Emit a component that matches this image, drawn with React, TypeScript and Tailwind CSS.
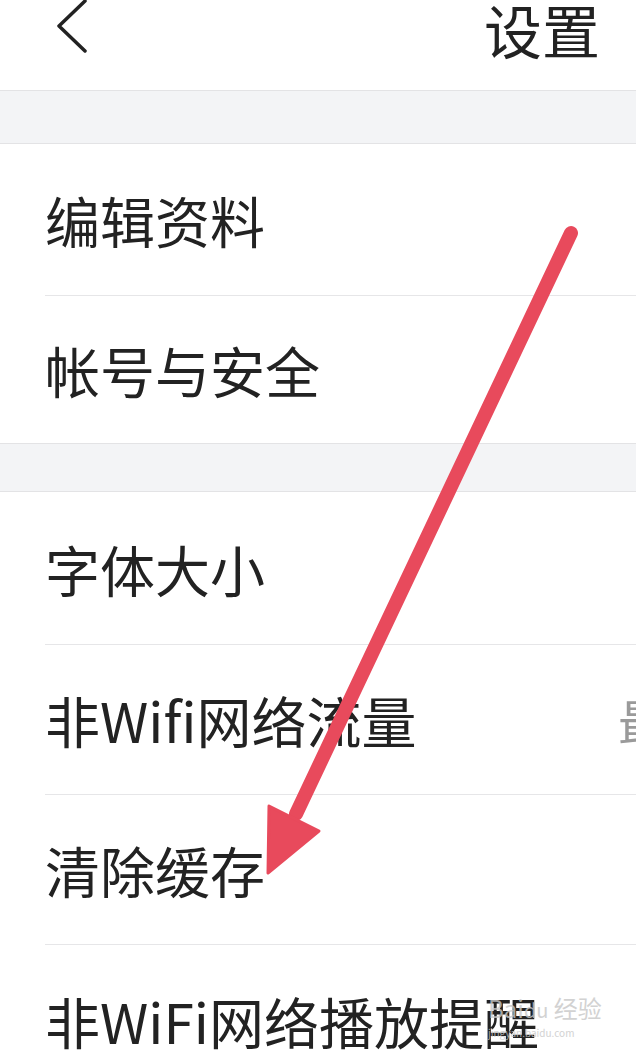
const rowText = "text-[55px] leading-none text-[#222222]";

const Row = ({
  label,
  divider = true,
  right,
  className = "",
}: {
  label: string;
  divider?: boolean;
  right?: string;
  className?: string;
}) => (
  <div className="pl-[45px]">
    <div
      className={`flex items-center justify-between overflow-hidden ${
        divider ? "border-b border-[#e6e6e8]" : ""
      } ${className}`}
    >
      <span className={`${rowText} whitespace-nowrap`}>{label}</span>
      {right && (
        <span className="text-[50px] leading-none text-[#9a9a9a] whitespace-nowrap translate-x-[18px] w-[36px] overflow-hidden">
          {right}
        </span>
      )}
    </div>
  </div>
);

const Arrow = () => (
  <svg
    className="absolute left-0 top-0 pointer-events-none"
    width="636"
    height="1060"
    viewBox="0 0 636 1060"
  >
    <line
      x1="571"
      y1="233"
      x2="296"
      y2="814"
      stroke="#e84a5c"
      strokeWidth="14"
      strokeLinecap="round"
    />
    <polygon
      points="268,873 269,806 319,831"
      fill="#e84a5c"
      stroke="#e84a5c"
      strokeWidth="3"
      strokeLinejoin="round"
    />
  </svg>
);

export default function App() {
  return (
    <div
      className="relative w-[636px] h-[1060px] overflow-hidden bg-white"
      style={{ fontFamily: '"Noto Sans CJK SC", "Noto Sans", sans-serif' }}
    >
      {/* header */}
      <div className="h-[90px] flex items-start justify-between pl-[55px] pr-[36px]">
        <svg width="34" height="56" viewBox="0 0 34 56" className="-mt-[2px]">
          <path
            d="M30 3 L4 28 L30 53"
            fill="none"
            stroke="#222222"
            strokeWidth="3.5"
            strokeLinecap="round"
            strokeLinejoin="round"
          />
        </svg>
        <span className="text-[58px] leading-none text-[#222222]">设置</span>
      </div>

      <div className="h-[54px] flex flex-col">
        <div className="flex-1 border-y border-[#e3e3e5] bg-[#f3f4f6]" />
      </div>

      <Row label="编辑资料" className="h-[152px]" />
      <Row label="帐号与安全" divider={false} className="h-[147px]" />

      <div className="h-[49px] flex flex-col">
        <div className="flex-1 border-y border-[#e3e3e5] bg-[#f3f4f6]" />
      </div>

      <Row label="字体大小" className="h-[153px]" />
      <Row label="非Wifi网络流量" right="最高" className="h-[150px]" />
      <Row label="清除缓存" className="h-[150px]" />
      <Row label="非WiFi网络播放提醒" divider={false} className="h-[150px]" />

      {/* watermark */}
      <div className="absolute left-[488px] top-[996px] flex flex-col items-start text-[#c8c8c8] opacity-80 pointer-events-none">
        <span className="text-[24px] leading-none whitespace-nowrap">
          Bai<span className="text-[20px]">du</span> 经验
        </span>
        <span className="text-[10px] leading-none mt-[8px] whitespace-nowrap">jingyan.baidu.com</span>
      </div>

      <Arrow />
    </div>
  );
}
